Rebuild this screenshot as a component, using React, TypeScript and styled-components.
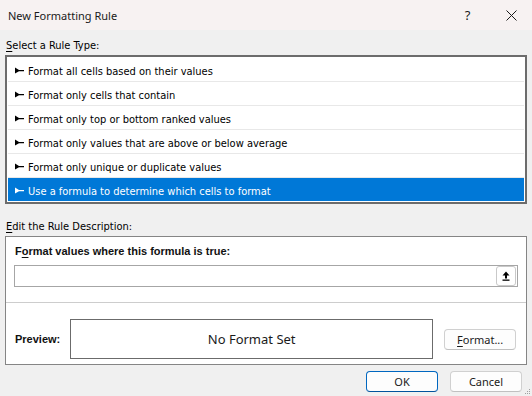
import React from 'react';
import styled, { createGlobalStyle } from 'styled-components';

const GlobalStyle = createGlobalStyle`
  html, body {
    margin: 0;
    padding: 0;
    background: #f0f0f0;
  }
  body {
    font-family: "Noto Sans", "Open Sans", sans-serif;
    font-size: 11px;
    color: #000;
  }
`;

const UI_FONT = `"Tahoma", "DejaVu Sans Condensed", "DejaVu Sans", sans-serif`;
const BOLD_FONT = `"Liberation Sans", Arial, sans-serif`;

const Dialog = styled.div`
  position: relative;
  width: 532px;
  height: 396px;
  background: #f0f0f0;
  display: flex;
  flex-direction: column;
  overflow: hidden;
`;

const TitleBar = styled.div`
  height: 30px;
  background: #f7f2f2;
  display: flex;
  align-items: center;
  justify-content: space-between;
  padding-left: 8px;
  > .title {
    font-size: 11px;
    color: #1a1a1a;
  }
`;

const TitleButtons = styled.div`
  display: flex;
  align-items: center;
  height: 100%;
`;

const TitleButton = styled.div<{ $width: number }>`
  width: ${(p) => p.$width}px;
  height: 100%;
  display: flex;
  align-items: center;
  justify-content: center;
  font-size: 13px;
  color: #1a1a1a;
`;

const Body = styled.div`
  padding: 0 5px;
  display: flex;
  flex-direction: column;
`;

const SectionLabel = styled.div<{ $top: number }>`
  font-family: ${UI_FONT};
  font-size: 11px;
  line-height: 16px;
  height: 16px;
  margin: ${(p) => p.$top}px 0 1px 1px;
  color: #000;
  u {
    text-decoration-thickness: 1px;
    text-underline-offset: 2px;
  }
`;

const RuleList = styled.div`
  border: 2px solid #6c6c6c;
  background: #fff;
  padding: 1px;
  display: flex;
  flex-direction: column;
`;

const RuleRow = styled.div<{ $selected?: boolean }>`
  height: 24px;
  box-sizing: border-box;
  display: flex;
  align-items: center;
  gap: 4px;
  padding: 3px 0 0 7px;
  font-family: ${UI_FONT};
  font-size: 11px;
  color: ${(p) => (p.$selected ? '#fff' : '#000')};
  background: ${(p) => (p.$selected ? '#0078d7' : '#fff')};
  border-bottom: 1px solid #e8e8e8;
  &:last-child {
    height: 23px;
    border-bottom: none;
  }
  > svg {
    margin-top: -1px;
  }
`;

const DescBox = styled.div`
  height: 129px;
  box-sizing: border-box;
  border: 1px solid #858585;
  background: #fff;
  display: flex;
  flex-direction: column;
`;

const FormulaSection = styled.div`
  padding: 6px 8px 15px 8px;
  display: flex;
  flex-direction: column;
  gap: 6px;
  border-bottom: 1px solid #cdcdcd;
`;

const BoldLabel = styled.div<{ $width?: number }>`
  font-family: ${BOLD_FONT};
  font-size: 11px;
  font-weight: bold;
  line-height: 16px;
  padding-left: 1px;
  flex: ${(p) => (p.$width ? `0 0 ${p.$width}px` : '0 0 auto')};
  color: #111;
  u {
    text-underline-offset: 2px;
  }
`;

const FormulaInput = styled.div`
  height: 22px;
  box-sizing: border-box;
  border: 1px solid #a6a6a6;
  background: #fff;
  display: flex;
  align-items: center;
  justify-content: flex-end;
  padding-right: 1px;
`;

const CollapseButton = styled.div`
  width: 20px;
  height: 20px;
  box-sizing: border-box;
  border: 1px solid #c9c9c9;
  border-radius: 3px;
  background: #fff;
  display: flex;
  align-items: center;
  justify-content: center;
`;

const PreviewSection = styled.div`
  padding: 16px 10px 6px 8px;
  display: flex;
  align-items: center;
`;

const PreviewBox = styled.div`
  width: 365px;
  height: 40px;
  box-sizing: border-box;
  border: 1px solid #6b6b6b;
  display: flex;
  align-items: center;
  justify-content: center;
  font-size: 13px;
  color: #1a1a1a;
`;

const Button = styled.div<{ $primary?: boolean }>`
  width: 72px;
  height: 21px;
  box-sizing: border-box;
  border: 1px solid ${(p) => (p.$primary ? '#0067c0' : '#d0d0d0')};
  border-bottom-color: ${(p) => (p.$primary ? '#00539c' : '#c0c0c0')};
  border-radius: 4px;
  background: #fdfdfd;
  display: flex;
  align-items: center;
  justify-content: center;
  font-size: 11px;
  color: #1a1a1a;
  u {
    text-underline-offset: 2px;
  }
`;

const FormatButton = styled(Button)`
  margin-left: 11px;
`;

const Footer = styled.div`
  display: flex;
  justify-content: flex-end;
  gap: 12px;
  padding: 6px 10px 0 0;
`;

const Grip = styled.svg`
  position: absolute;
  right: 1px;
  bottom: 1px;
`;

const RULES = [
  'Format all cells based on their values',
  'Format only cells that contain',
  'Format only top or bottom ranked values',
  'Format only values that are above or below average',
  'Format only unique or duplicate values',
  'Use a formula to determine which cells to format',
];

const Bullet = ({ color }: { color: string }) => (
  <svg width="9" height="7" viewBox="0 0 9 7">
    <path d="M0 0.5 L4 3 H9 V4.2 H4 L0 6.5 Z" fill={color} />
  </svg>
);

const CloseIcon = () => (
  <svg width="11" height="11" viewBox="0 0 11 11">
    <path d="M0.5 0.5 L10.5 10.5 M10.5 0.5 L0.5 10.5" stroke="#1a1a1a" strokeWidth="1" />
  </svg>
);

const UploadIcon = () => (
  <svg width="8" height="10" viewBox="0 0 8 10">
    <path d="M4 0.5 L7.5 4.5 H5 V7.5 H3 V4.5 H0.5 Z" fill="#000" />
    <rect x="0.5" y="8.5" width="7" height="1.3" fill="#000" />
  </svg>
);

const App = () => {
  const selected = RULES.length - 1;
  return (
    <>
      <GlobalStyle />
      <Dialog>
        <TitleBar>
          <span className="title">New Formatting Rule</span>
          <TitleButtons>
            <TitleButton $width={45}>?</TitleButton>
            <TitleButton $width={42}>
              <CloseIcon />
            </TitleButton>
          </TitleButtons>
        </TitleBar>
        <Body>
          <SectionLabel $top={8}>
            <u>S</u>elect a Rule Type:
          </SectionLabel>
          <RuleList>
            {RULES.map((rule, i) => (
              <RuleRow key={rule} $selected={i === selected}>
                <Bullet color={i === selected ? '#fff' : '#000'} />
                {rule}
              </RuleRow>
            ))}
          </RuleList>
          <SectionLabel $top={15}>
            <u>E</u>dit the Rule Description:
          </SectionLabel>
          <DescBox>
            <FormulaSection>
              <BoldLabel>
                F<u>o</u>rmat values where this formula is true:
              </BoldLabel>
              <FormulaInput>
                <CollapseButton>
                  <UploadIcon />
                </CollapseButton>
              </FormulaInput>
            </FormulaSection>
            <PreviewSection>
              <BoldLabel $width={55}>Preview:</BoldLabel>
              <PreviewBox>No Format Set</PreviewBox>
              <FormatButton>
                <u>F</u>ormat...
              </FormatButton>
            </PreviewSection>
          </DescBox>
        </Body>
        <Footer>
          <Button $primary>OK</Button>
          <Button>Cancel</Button>
        </Footer>
        <Grip width="6" height="6" viewBox="0 0 6 6">
          <rect x="4" y="0" width="1" height="1" fill="#a0a0a0" />
          <rect x="2" y="2" width="1" height="1" fill="#a0a0a0" />
          <rect x="4" y="2" width="1" height="1" fill="#a0a0a0" />
          <rect x="0" y="4" width="1" height="1" fill="#a0a0a0" />
          <rect x="2" y="4" width="1" height="1" fill="#a0a0a0" />
          <rect x="4" y="4" width="1" height="1" fill="#a0a0a0" />
        </Grip>
      </Dialog>
    </>
  );
};

export default App;
